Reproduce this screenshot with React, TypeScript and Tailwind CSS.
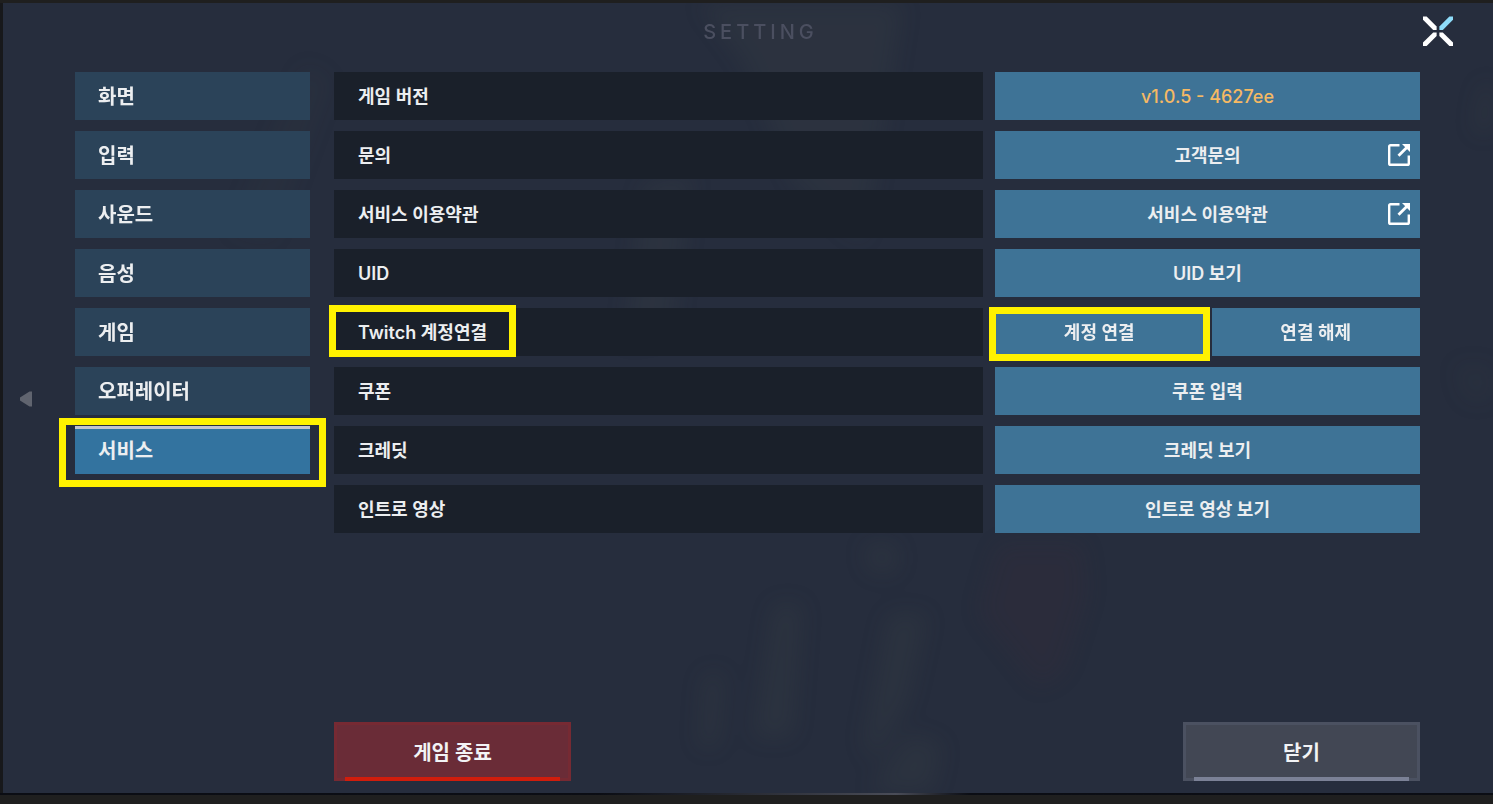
import { useState } from 'react'
import type { ReactNode } from 'react'
import clsx from 'clsx'

const TABS = ['화면', '입력', '사운드', '음성', '게임', '오퍼레이터', '서비스']

type Row = {
  label: string
  version?: string
  link?: string
  actions?: string[]
}

const ROWS: Row[] = [
  { label: '게임 버전', version: 'v1.0.5 - 4627ee' },
  { label: '문의', link: '고객문의' },
  { label: '서비스 이용약관', link: '서비스 이용약관' },
  { label: 'UID', actions: ['UID 보기'] },
  { label: 'Twitch 계정연결', actions: ['계정 연결', '연결 해제'] },
  { label: '쿠폰', actions: ['쿠폰 입력'] },
  { label: '크레딧', actions: ['크레딧 보기'] },
  { label: '인트로 영상', actions: ['인트로 영상 보기'] },
]

const cell = 'relative flex h-12 flex-1 items-center justify-center bg-[#3e7396] pt-0.5'

function Highlight({ className }: { className: string }) {
  return <span aria-hidden className={clsx('pointer-events-none absolute z-10 border-[7px] border-[#fff200]', className)} />
}

function CloseIcon() {
  return (
    <svg width="32" height="32" viewBox="0 0 32 32">
      <path d="M1 1.4H4.6L14.6 11.4V15H11.2L1 4.8Z" fill="#fff" />
      <path d="M31 1.4H27.4L17.4 11.4V15H20.8L31 4.8Z" fill="#8edcfa" />
      <path d="M1 31H4.6L14.6 21V17.4H11.2L1 27.6Z" fill="#fff" />
      <path d="M31 31H27.4L17.4 21V17.4H20.8L31 27.6Z" fill="#fff" />
    </svg>
  )
}

function ExternalIcon() {
  return (
    <svg width="24" height="24" viewBox="0 0 24 24" fill="none" className="absolute inset-y-3 right-[9px]">
      <path d="M12.5 2.2H3.6Q2.2 2.2 2.2 3.6V20.4Q2.2 21.8 3.6 21.8H20.4Q21.8 21.8 21.8 20.4V12.5" stroke="#fff" strokeWidth="2.4" />
      <path d="M11.5 12.8 L20 4.3" stroke="#fff" strokeWidth="2.8" />
      <path d="M15 1H23V9Z" fill="#fff" />
    </svg>
  )
}

/* blurred scene behind the panel */
function Backdrop() {
  return (
    <svg
      aria-hidden
      className="pointer-events-none absolute inset-0 h-full w-full"
      viewBox="0 0 1490 790"
      preserveAspectRatio="none"
    >
      <defs>
        <filter id="haze" x="-40%" y="-40%" width="180%" height="180%">
          <feGaussianBlur stdDeviation="11" />
        </filter>
      </defs>
      <g filter="url(#haze)" fill="#4b5250" opacity="0.16">
        <path d="M695 0H900L880 130L860 240L790 180L740 60Z" />
        <path d="M640 180L690 170L670 330L620 340Z" />
        <path d="M770 600L800 600L790 735L750 735Z" />
        <path d="M885 610H925L905 700L870 760L860 740Z" />
        <path d="M700 670H722L715 745H695Z" />
        <path d="M860 540H895V570H865Z" />
        <path d="M905 730L940 740L930 790H865Z" />
        <path d="M300 60L330 75L270 240L225 230Z" opacity="0.5" />
        <path d="M1478 80H1490V130H1470Z" />
        <path d="M1450 360H1490V400H1460Z" opacity="0.5" />
      </g>
      <path d="M995 540H1080L1085 590L1060 670L1035 685L975 610Z" fill="#4a2c38" opacity="0.15" filter="url(#haze)" />
    </svg>
  )
}

function FooterButton({ children, tone }: { children: ReactNode; tone: 'danger' | 'neutral' }) {
  return (
    <button
      type="button"
      className={clsx(
        'relative h-[59px] w-[237px] border-[3px] pt-0.5 text-xl font-semibold text-[#f2f3f5]',
        tone === 'danger' ? 'border-[#762a33] bg-[#6a2c37]' : 'border-[#4b5161] bg-[#424754]',
      )}
    >
      {children}
      <span
        className={clsx(
          'absolute inset-x-2 -bottom-[3px] h-1',
          tone === 'danger' ? 'bg-[#d01d0c]' : 'bg-[#7b8196]',
        )}
      />
    </button>
  )
}

function RowValue({ row }: { row: Row }) {
  if (row.version) return <output className={clsx(cell, 'font-medium text-[#f5b964]')}>{row.version}</output>
  if (row.link) {
    return (
      <a href="#" className={cell}>
        {row.link}
        <ExternalIcon />
      </a>
    )
  }
  return (
    <>
      {row.actions?.map((action) => (
        <button key={action} type="button" className={cell}>
          {action}
          {action === '계정 연결' && <Highlight className="-top-px -bottom-[5px] -left-1.5 -right-1.5" />}
        </button>
      ))}
    </>
  )
}

export default function App() {
  const [tab, setTab] = useState('서비스')

  return (
    <div className="flex min-h-screen flex-col border-t-[3px] border-b-[9px] border-[#1f1f1f] bg-[#262d3d] font-[Inter,'Noto_Sans_CJK_KR',sans-serif] text-[#eceef0]">
      <div className="relative flex flex-1 border-l-[3px] border-[#17181b]">
        <Backdrop />
        <button type="button" aria-label="이전" className="relative flex w-[72px] shrink-0 items-center pt-0.5 pl-4">
          <svg width="14" height="16" viewBox="0 0 14 16" fill="#60646f">
            <path d="M10.5 0.5H13V15.5H10.5L1 9.5V6.5Z" />
          </svg>
        </button>

        <div className="relative flex flex-1 flex-col">
          <header className="flex h-[69px] items-start pt-3 pr-[39px] pl-6">
            <h1 className="flex-1 text-center text-xl leading-[34px] font-medium tracking-[0.2em] text-[#4b4f60]">SETTING</h1>
            <button type="button" aria-label="닫기">
              <CloseIcon />
            </button>
          </header>

          <main className="flex flex-1 gap-6 pr-[73px]">
            <nav className="flex w-[235px] shrink-0 flex-col gap-[11px]">
              {TABS.map((t) => (
                <button
                  key={t}
                  type="button"
                  onClick={() => setTab(t)}
                  className={clsx(
                    'relative h-12 pt-0.5 pl-[23px] text-left text-xl font-semibold',
                    t === tab ? 'bg-[#33739f]' : 'bg-[#2b4359]',
                  )}
                >
                  {t === tab && <span className="absolute inset-x-0 top-0 h-[3px] bg-[#c0c4d0]" />}
                  {t}
                  {t === '서비스' && <Highlight className="-top-2 -bottom-[13px] -left-4 -right-4" />}
                </button>
              ))}
            </nav>

            <div className="flex flex-1 flex-col">
              <div className="flex flex-col gap-[11px] text-lg font-semibold">
                {ROWS.map((row) => (
                  <div key={row.label} className="flex gap-3">
                    <div className="relative flex h-12 flex-1 items-center bg-[#1a202a] pt-0.5 pl-6">
                      {row.label}
                      {row.label.startsWith('Twitch') && (
                        <Highlight className="-top-[3px] -bottom-px -left-[5px] w-[187px]" />
                      )}
                    </div>
                    <div className="flex w-[425px] gap-2">
                      <RowValue row={row} />
                    </div>
                  </div>
                ))}
              </div>

              <footer className="mt-auto flex justify-between pb-3">
                <FooterButton tone="danger">게임 종료</FooterButton>
                <FooterButton tone="neutral">닫기</FooterButton>
              </footer>
            </div>
          </main>
        </div>
      </div>
      <div className="h-0.5 bg-linear-to-r from-[#0b0d14] via-[#4a4d58] to-[#0b0d14] from-40% via-60% to-65%" />
    </div>
  )
}
